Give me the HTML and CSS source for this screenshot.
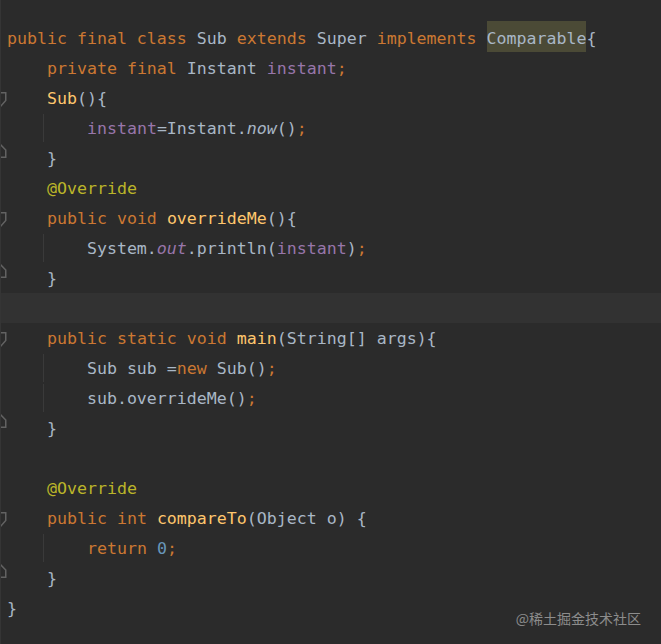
FILE: index.html
```html
<!DOCTYPE html>
<html>
<head>
<meta charset="utf-8">
<link rel="stylesheet" href="styles.css">
</head>
<body>
<div class="editor">
  <div class="line"><span class="gut"></span><code><span class="k">public final class</span> Sub <span class="k">extends</span> Super <span class="k">implements</span> <span class="hl">Comparable</span>{</code></div>
  <div class="line"><span class="gut"></span><code>    <span class="k">private final</span> Instant <span class="f">instant</span><span class="k">;</span></code></div>
  <div class="line"><span class="gut"><svg class="fold open" width="7" height="16" viewBox="0 0 7 16"><path d="M-1 0.75H5.75V8.5L0 15" /></svg></span><code>    <span class="m">Sub</span>(){</code></div>
  <div class="line g"><span class="gut"></span><code>        <span class="f">instant</span>=Instant.<i>now</i>()<span class="k">;</span></code></div>
  <div class="line"><span class="gut"><svg class="fold close" width="7" height="16" viewBox="0 0 7 16"><path d="M0 1L5.75 7V14.25H-1" /></svg></span><code>    }</code></div>
  <div class="line"><span class="gut"></span><code>    <span class="a">@Override</span></code></div>
  <div class="line"><span class="gut"><svg class="fold open" width="7" height="16" viewBox="0 0 7 16"><path d="M-1 0.75H5.75V8.5L0 15" /></svg></span><code>    <span class="k">public void</span> <span class="m">overrideMe</span>(){</code></div>
  <div class="line g"><span class="gut"></span><code>        System.<i class="f">out</i>.println(<span class="f">instant</span>)<span class="k">;</span></code></div>
  <div class="line"><span class="gut"><svg class="fold close" width="7" height="16" viewBox="0 0 7 16"><path d="M0 1L5.75 7V14.25H-1" /></svg></span><code>    }</code></div>
  <div class="line cur"><span class="gut"></span><code> </code></div>
  <div class="line"><span class="gut"><svg class="fold open" width="7" height="16" viewBox="0 0 7 16"><path d="M-1 0.75H5.75V8.5L0 15" /></svg></span><code>    <span class="k">public static void</span> <span class="m">main</span>(String[] args){</code></div>
  <div class="line g"><span class="gut"></span><code>        Sub sub =<span class="k">new</span> Sub()<span class="k">;</span></code></div>
  <div class="line g"><span class="gut"></span><code>        sub.overrideMe()<span class="k">;</span></code></div>
  <div class="line"><span class="gut"><svg class="fold close" width="7" height="16" viewBox="0 0 7 16"><path d="M0 1L5.75 7V14.25H-1" /></svg></span><code>    }</code></div>
  <div class="line"><span class="gut"></span><code> </code></div>
  <div class="line"><span class="gut"></span><code>    <span class="a">@Override</span></code></div>
  <div class="line"><span class="gut"><svg class="fold open" width="7" height="16" viewBox="0 0 7 16"><path d="M-1 0.75H5.75V8.5L0 15" /></svg></span><code>    <span class="k">public int</span> <span class="m">compareTo</span>(Object o) {</code></div>
  <div class="line g"><span class="gut"></span><code>        <span class="k">return</span> <span class="n">0</span><span class="k">;</span></code></div>
  <div class="line"><span class="gut"><svg class="fold close" width="7" height="16" viewBox="0 0 7 16"><path d="M0 1L5.75 7V14.25H-1" /></svg></span><code>    }</code></div>
  <div class="line"><span class="gut"></span><code>}</code></div>
  <div class="watermark">@稀土掘金技术社区</div>
</div>
</body>
</html>
```
FILE: styles.css
```css
html, body {
  margin: 0;
  padding: 0;
  background: #2b2b2b;
}

.editor {
  position: relative;
  width: 661px;
  height: 644px;
  box-sizing: border-box;
  padding-top: 23px;
  background: #2b2b2b;
  border-left: 1px solid #353535;
  overflow: hidden;
}

.line {
  display: flex;
  align-items: flex-start;
  height: 30px;
  margin-left: -1px;
}

.line.cur {
  background: #323232;
}

.line.g {
  background: linear-gradient(#3a3a3a, #3a3a3a) no-repeat 43px 1px / 1px 28px;
}

.gut {
  width: 7px;
  flex: 0 0 7px;
}

.fold {
  display: block;
  fill: none;
  stroke: #626262;
  stroke-width: 1.5;
}

.fold.open {
  margin-top: 9px;
}

.fold.close {
  margin-top: 0px;
}

code {
  display: block;
  padding-top: 1px;
  height: 29px;
  font-family: "DejaVu Sans Mono", "Liberation Mono", monospace;
  font-size: 16.6px;
  line-height: 30px;
  white-space: pre;
  color: #a9b7c6;
}

i {
  font-style: italic;
}

.k { color: #cc7832; }
.f { color: #9876aa; }
.m { color: #ffc66d; }
.a { color: #bbb529; }
.n { color: #6897bb; }

.hl {
  background: #4b4a36;
  display: inline-block;
  height: 31px;
  margin-top: -3px;
  line-height: 35px;
  vertical-align: top;
}

.watermark {
  position: absolute;
  right: 20px;
  bottom: 17px;
  font-family: "Noto Sans CJK SC", "Noto Sans", sans-serif;
  font-size: 14px;
  line-height: 18px;
  color: #8c8c8c;
}
```
